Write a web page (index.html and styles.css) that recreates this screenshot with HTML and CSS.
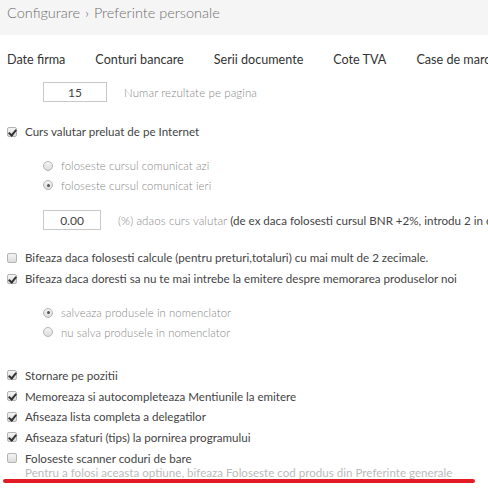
FILE: index.html
```html
<!DOCTYPE html>
<html lang="ro">

<head>
    <meta charset="UTF-8">
    <meta name="viewport" content="width=device-width, initial-scale=1.0">
    <title>Preferinte personale</title>
    <link rel="stylesheet" href="styles.css">
</head>

<body>
    <!-- Breadcrumb -->
    <div class="breadcrumb">Configurare <span class="sep">&#8250;</span> Preferinte personale</div>

    <!-- Tabs -->
    <div class="tabs">
        <span class="tab">Date firma</span>
        <span class="tab">Conturi bancare</span>
        <span class="tab">Serii documente</span>
        <span class="tab">Cote TVA</span>
        <span class="tab">Case de marcat</span>
    </div>

    <div class="settings">
        <div class="field-row rows-per-page">
            <input type="text" class="num-input wide" value="15">
            <span class="hint">Numar rezultate pe pagina</span>
        </div>

        <div class="check-group group-curs">
            <label class="check-row"><input type="checkbox" class="box" checked> Curs valutar preluat de pe Internet</label>
        </div>

        <div class="radio-group group-azi">
            <label class="radio-row"><input type="radio" name="curs" class="dot"> foloseste cursul comunicat azi</label>
            <label class="radio-row"><input type="radio" name="curs" class="dot" checked> foloseste cursul comunicat ieri</label>
        </div>

        <div class="field-row adaos">
            <input type="text" class="num-input" value="0.00">
            <span class="hint">(%) adaos curs valutar <span class="dark">(de ex daca folosesti cursul BNR +2%, introdu 2 in campul alaturat)</span></span>
        </div>

        <div class="check-group group-calc">
            <label class="check-row"><input type="checkbox" class="box"> Bifeaza daca folosesti calcule (pentru preturi,totaluri) cu mai mult de 2 zecimale.</label>
            <label class="check-row"><input type="checkbox" class="box" checked> Bifeaza daca doresti sa nu te mai intrebe la emitere despre memorarea produselor noi</label>
        </div>

        <div class="radio-group group-nomenclator">
            <label class="radio-row"><input type="radio" name="prod" class="dot" checked> salveaza produsele in nomenclator</label>
            <label class="radio-row"><input type="radio" name="prod" class="dot"> nu salva produsele in nomenclator</label>
        </div>

        <div class="check-group group-misc">
            <label class="check-row"><input type="checkbox" class="box" checked> Stornare pe pozitii</label>
            <label class="check-row"><input type="checkbox" class="box" checked> Memoreaza si autocompleteaza Mentiunile la emitere</label>
            <label class="check-row"><input type="checkbox" class="box" checked> Afiseaza lista completa a delegatilor</label>
            <label class="check-row"><input type="checkbox" class="box" checked> Afiseaza sfaturi (tips) la pornirea programului</label>
            <label class="check-row"><input type="checkbox" class="box"> Foloseste scanner coduri de bare</label>
        </div>
        <div class="help">Pentru a folosi aceasta optiune, bifeaza Foloseste cod produs din Preferinte generale</div>
        <div class="mark"></div>
    </div>
</body>

</html>
```

FILE: styles.css
```css
body {
    font-family: Lato, "Open Sans", sans-serif;
    background-color: #ffffff;
    color: #333333;
    margin: 0;
    padding: 0;
    overflow: hidden;
}

.breadcrumb {
    height: 35px;
    box-sizing: border-box;
    padding: 3px 7px 0;
    background: #f5f5f5;
    font-size: 14.5px;
    font-weight: 300;
    line-height: 20px;
    color: #6f6f6f;
    white-space: nowrap;
}

.breadcrumb .sep {
    margin: 0 1px;
}

.tabs {
    display: flex;
    gap: 30px;
    margin-top: 15px;
    padding-left: 7px;
    font-size: 12.6px;
    line-height: 20px;
    color: #333333;
    white-space: nowrap;
}

.settings {
    padding-left: 7px;
    white-space: nowrap;
}

.field-row {
    display: flex;
    align-items: center;
    padding-left: 36px;
}

.rows-per-page {
    margin-top: 12px;
}

.adaos {
    margin-top: 15px;
}

.num-input {
    width: 58px;
    height: 20px;
    box-sizing: border-box;
    border: 1px solid #c8c8c8;
    padding: 0;
    font-family: inherit;
    font-size: 12px;
    color: #444444;
    text-align: center;
    margin: 0 17px 0 0;
}

.num-input.wide {
    width: 64px;
}

.hint {
    font-size: 11.5px;
    font-weight: 300;
    letter-spacing: 0.1px;
    color: #888888;
}

.hint .dark {
    font-size: 11.6px;
    font-weight: 400;
    letter-spacing: 0;
    color: #444444;
}

.check-row {
    display: flex;
    align-items: center;
    height: 21px;
    font-size: 11.6px;
    color: #444444;
}

.group-curs {
    margin-top: 19px;
}

.group-calc {
    margin-top: 17px;
}

.group-misc {
    margin-top: 23px;
}

.group-misc .check-row {
    height: 20.7px;
}

.radio-group {
    padding-left: 36px;
    margin-top: 14px;
}

.radio-row {
    display: flex;
    align-items: center;
    height: 19.5px;
    font-size: 11.3px;
    font-weight: 300;
    letter-spacing: 0.1px;
    color: #888888;
}

input.box,
input.dot {
    appearance: none;
    -webkit-appearance: none;
    margin: 0 8px 0 0;
    width: 10px;
    height: 10px;
    flex: none;
    border: 1px solid #b4b4b4;
    background: linear-gradient(#f4f4f4, #dcdcdc);
    position: relative;
}

input.box {
    border-radius: 2px;
}

input.box:checked::after {
    content: "";
    position: absolute;
    left: 2px;
    top: 0px;
    width: 3px;
    height: 6px;
    border: solid #333333;
    border-width: 0 2px 2px 0;
    transform: rotate(40deg);
}

input.dot {
    border-radius: 50%;
    margin-right: 8px;
}

input.dot:checked::after {
    content: "";
    position: absolute;
    left: 2.5px;
    top: 2.5px;
    width: 3px;
    height: 3px;
    border-radius: 50%;
    background: #555555;
}

.help {
    padding-left: 18px;
    margin-top: -2px;
    font-size: 11.6px;
    line-height: 13px;
    color: #bbbbbb;
}

.mark {
    width: 472px;
    height: 4px;
    margin: 0 0 0 -4px;
    border-radius: 2px;
    background: #e21b25;
}
```
